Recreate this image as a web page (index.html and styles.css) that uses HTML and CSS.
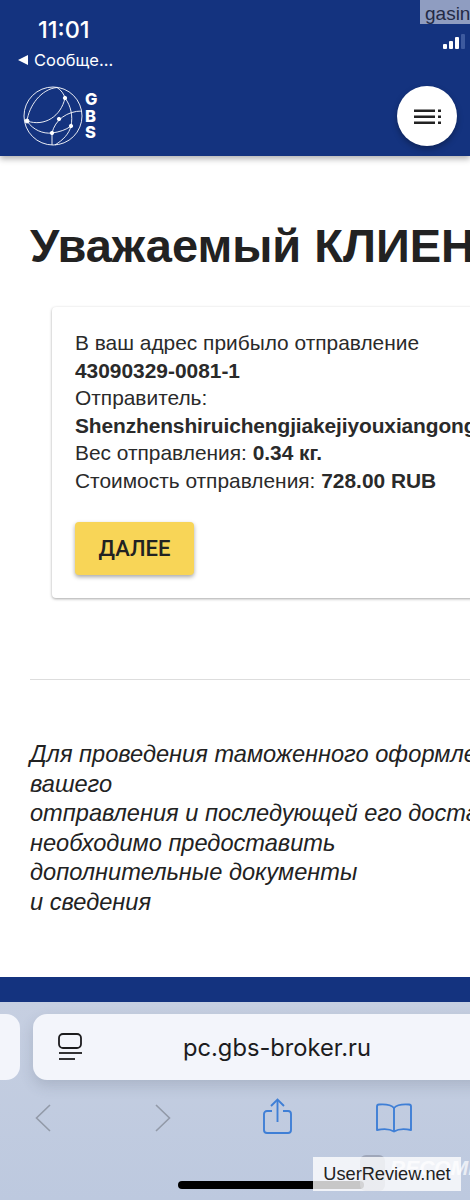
FILE: index.html
```html
<!DOCTYPE html>
<html lang="ru">
<head>
  <meta charset="UTF-8" />
  <meta name="viewport" content="width=device-width, initial-scale=1.0" />
  <title>GBS</title>
  <link rel="stylesheet" href="styles.css">
</head>
<body>
  <div class="screen">
    <header class="top">
      <div class="status">
        <div>
          <div class="time">11:01</div>
          <div class="back"><span class="back-arrow"></span>Сообще...</div>
        </div>
        <div class="signal">
          <span class="s1"></span><span class="s2"></span><span class="s3"></span><span class="s4"></span>
        </div>
      </div>
      <div class="brand">
        <div class="logo">
          <svg width="60" height="60" viewBox="0 0 60 60" fill="none" stroke="#fff" stroke-width="0.9">
            <circle cx="30" cy="30" r="29"/>
            <path d="M4 35C6 20 18 3 34 1.500C38 4 41 8 42 12"/>
            <path d="M4 35C22 41 38 30 42 12"/>
            <path d="M42 12C48 20 50 30 48 40C46 48 40 54 32 59"/>
            <path d="M4 35C10 44 20 48 29 47C36 46 43 44 48 40"/>
            <path d="M59 25C44 25 32 34 29 47V59"/>
            <circle cx="42" cy="12" r="1.700" fill="#fff"/>
            <circle cx="4" cy="35" r="2" fill="#fff"/>
            <circle cx="36" cy="33" r="1.700" fill="#fff"/>
            <circle cx="48" cy="40" r="1.700" fill="#fff"/>
            <circle cx="29" cy="47" r="1.700" fill="#fff"/>
          </svg>
          <div class="logo-text">G<br>B<br>S</div>
        </div>
        <div class="menu-btn">
          <svg width="27" height="16" viewBox="0 0 27 16" fill="#222">
            <rect x="0" y="1.500" width="21" height="2.500"/>
            <rect x="0" y="7.500" width="21" height="2.500"/>
            <rect x="0" y="13.500" width="21" height="2.500"/>
            <rect x="24" y="1.500" width="3" height="2.500"/>
            <rect x="24" y="7.500" width="3" height="2.500"/>
            <rect x="24" y="13.500" width="3" height="2.500"/>
          </svg>
        </div>
      </div>
    </header>

    <main class="content">
      <h1>Уважаемый КЛИЕНТ</h1>
      <div class="card">
        <p>В ваш адрес прибыло отправление</p>
        <p><b>43090329-0081-1</b></p>
        <p>Отправитель:</p>
        <p class="sender"><b>Shenzhenshiruichengjiakejiyouxiangongsi</b></p>
        <p>Вес отправления: <b>0.34 кг.</b></p>
        <p>Стоимость отправления: <b>728.00 RUB</b></p>
        <button class="next">ДАЛЕЕ</button>
      </div>
      <hr class="line">
      <div class="note">
        Для проведения таможенного оформления<br>
        вашего<br>
        отправления и последующей его доставки<br>
        необходимо предоставить<br>
        дополнительные документы<br>
        и сведения
      </div>
    </main>

    <div class="footer"></div>

    <div class="browser">
      <div class="tabs">
        <div class="tab-prev"></div>
        <div class="url">
          <svg class="url-icon" width="24" height="28" viewBox="0 0 24 28" fill="none" stroke="#1c1c1e" stroke-width="1.800">
            <rect x="1" y="1" width="22" height="14" rx="4"/>
            <path d="M1 20H24"/>
            <path d="M1 26H17"/>
          </svg>
          <span class="url-text">pc.gbs-broker.ru</span>
        </div>
      </div>
      <div class="tools">
        <svg class="tool back-tool" width="16" height="28" viewBox="0 0 16 28" fill="none" stroke="#929aa8" stroke-width="1.600">
          <path d="M15 1L1.500 14L15 27"/>
        </svg>
        <svg class="tool fwd-tool" width="16" height="28" viewBox="0 0 16 28" fill="none" stroke="#929aa8" stroke-width="1.600">
          <path d="M1 1L14.500 14L1 27"/>
        </svg>
        <svg class="tool share-tool" width="29" height="36" viewBox="0 0 29 36" fill="none" stroke="#3f7fd6" stroke-width="1.900">
          <path d="M9 13H4a3 3 0 0 0-3 3v16a3 3 0 0 0 3 3h21a3 3 0 0 0 3-3V16a3 3 0 0 0-3-3h-5"/>
          <path d="M14.500 24V2"/>
          <path d="M8 8L14.500 1.500L21 8"/>
        </svg>
        <svg class="tool book-tool" width="36" height="30" viewBox="0 0 36 30" fill="none" stroke="#3f7fd6" stroke-width="1.900" stroke-linejoin="round">
          <path d="M18 5C15 1.500 10 1 3 1.500C1.800 1.600 1 2.500 1 3.500V27C8 25.500 14 26 18 28.500C22 26 28 25.500 35 27V3.500C35 2.500 34.200 1.600 33 1.500C26 1 21 1.500 18 5Z"/>
          <path d="M18 5V28"/>
        </svg>
      </div>
      <div class="home-bar"></div>
    </div>

    <div class="tag-gasin">gasin</div>
    <div class="watermark"><span class="wm-box"></span><span class="wm-text">RECOMMEND</span></div>
    <div class="tag-review">UserReview.net</div>
  </div>
</body>
</html>
```

FILE: styles.css
```css
* {
  box-sizing: border-box;
}
html, body {
  margin: 0;
  padding: 0;
}
body {
  font-family: "Liberation Sans", Arial, sans-serif;
  background: #fff;
  color: #222;
}
.screen {
  position: relative;
  width: 470px;
  height: 1200px;
  overflow: hidden;
  display: flex;
  flex-direction: column;
}

/* header */
.top {
  height: 156px;
  flex: none;
  background: #14337f;
  color: #fff;
  box-shadow: 0 3px 6px rgba(0,0,0,0.3);
  position: relative;
  z-index: 2;
}
.status {
  height: 72px;
  padding: 17px 0 0 18px;
  display: flex;
  justify-content: space-between;
}
.time {
  font-family: Inter, sans-serif;
  font-size: 23.500px;
  font-weight: 500;
  line-height: 26px;
  margin-left: 20px;
}
.back {
  font-family: Inter, sans-serif;
  font-size: 16.500px;
  line-height: 20px;
  margin-top: 7px;
  display: flex;
  align-items: center;
}
.back-arrow {
  width: 0;
  height: 0;
  border-top: 5px solid transparent;
  border-bottom: 5px solid transparent;
  border-right: 10px solid #fff;
  margin-right: 6px;
}
.signal {
  display: flex;
  align-items: flex-end;
  gap: 2px;
  height: 16px;
  margin: 16px 5px 0 0;
}
.signal span {
  width: 4px;
  background: #fff;
  border-radius: 1px;
}
.s1 { height: 5px; }
.s2 { height: 8px; }
.s3 { height: 12px; }
.signal .s4 { height: 15px; background: #3d5a9e; }
.brand {
  display: flex;
  justify-content: space-between;
  padding: 14px 13px 0 23px;
}
.logo {
  display: flex;
  align-items: center;
  gap: 2px;
}
.logo-text {
  font-family: Inter, sans-serif;
  font-weight: 800;
  font-size: 16.500px;
  line-height: 16.800px;
}
.menu-btn {
  width: 60px;
  height: 60px;
  border-radius: 50%;
  background: #fff;
  display: flex;
  align-items: center;
  justify-content: center;
  box-shadow: 0 3px 6px rgba(0,0,0,0.3);
}

/* page */
.content {
  flex: 1;
  padding: 63px 0 0 30px;
  white-space: nowrap;
}
h1 {
  margin: 0;
  font-size: 47px;
  line-height: 54px;
  font-weight: 700;
  color: #222;
}
.card {
  width: 460px;
  height: 291px;
  margin: 34px 0 0 22px;
  padding: 22px 0 0 23px;
  border-radius: 4px;
  box-shadow: 0 1px 3px rgba(0,0,0,0.35);
  font-size: 20.900px;
  line-height: 27.500px;
  color: #2a2a2a;
}
.card p {
  margin: 0;
}
.card .sender {
  letter-spacing: -0.1px;
}
.next {
  display: block;
  margin-top: 28px;
  width: 119px;
  height: 53px;
  border: none;
  border-radius: 4px;
  background: #f8d557;
  color: #222;
  font-family: Roboto, sans-serif;
  font-size: 22px;
  font-weight: 500;
  box-shadow: 0 2px 4px rgba(0,0,0,0.35);
}
.line {
  width: 440px;
  margin: 81px 0 0 0;
  border: none;
  border-top: 1px solid #ddd;
}
.note {
  margin-top: 60px;
  font-size: 23.600px;
  line-height: 29.500px;
  font-style: italic;
  color: #222;
}
.footer {
  height: 25px;
  flex: none;
  background: #14337f;
}

/* safari bar */
.browser {
  height: 198px;
  flex: none;
  background: linear-gradient(#c6cfe1, #bdc9df);
}
.tabs {
  display: flex;
  gap: 13px;
  padding-top: 12px;
}
.tab-prev {
  width: 20px;
  height: 66px;
  flex: none;
  background: #f3f5fb;
  border-radius: 0 14px 14px 0;
}
.url {
  flex: none;
  width: 460px;
  height: 66px;
  background: #f3f5fb;
  border-radius: 14px 0 0 14px;
  display: flex;
  align-items: center;
  padding-left: 25px;
  box-shadow: 0 6px 14px rgba(60,70,90,0.18);
}
.url-text {
  margin-left: 101px;
  font-family: Inter, sans-serif;
  font-size: 23.700px;
  color: #1c1c1e;
}
.tools {
  display: flex;
  align-items: center;
  height: 42px;
  margin-top: 17px;
  padding-left: 35px;
}
.fwd-tool { margin-left: 104px; }
.share-tool { margin-left: 92px; margin-top: -4px; }
.book-tool { margin-left: 84px; }
.home-bar {
  width: 186px;
  height: 8px;
  margin: 42px 0 0 178px;
  background: #000;
  border-radius: 4px;
}

/* overlays */
.tag-gasin {
  position: absolute;
  top: 0;
  left: 420px;
  width: 50px;
  height: 24px;
  background: #8f9dc1;
  color: #232a45;
  font-size: 19px;
  line-height: 27px;
  padding-left: 5px;
  overflow: hidden;
  z-index: 3;
}
.watermark {
  position: absolute;
  left: 360px;
  top: 1155px;
  display: flex;
  align-items: flex-start;
  gap: 5px;
  z-index: 3;
}
.wm-box {
  width: 25px;
  height: 36px;
  border-radius: 6px;
  background: rgba(120,125,140,0.45);
}
.wm-text {
  font-weight: 700;
  font-style: italic;
  font-size: 21px;
  line-height: 26px;
  color: rgba(255,255,255,0.7);
}
.tag-review {
  position: absolute;
  left: 313px;
  top: 1157px;
  width: 148px;
  height: 34px;
  background: rgba(255,255,255,0.78);
  color: #222;
  font-size: 18.200px;
  line-height: 34px;
  text-align: center;
  z-index: 3;
}
```
